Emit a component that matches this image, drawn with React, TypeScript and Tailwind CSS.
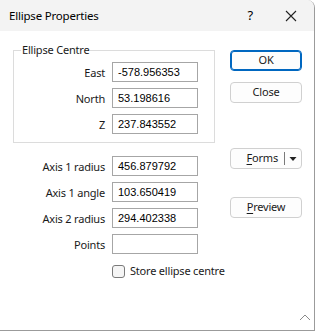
import React from "react";

const ui = "font-['Noto_Sans',sans-serif] text-[11px] tracking-[-0.2px] text-[#1a1a1a]";
const mono = "font-['Liberation_Sans',Arial,sans-serif] text-[11px] tracking-normal text-black";

function Field({ label, value }: { label: string; value?: string }) {
  return (
    <div className="flex items-center h-[20px]">
      <span className="w-[93px] pr-[7px] text-right leading-none whitespace-nowrap">{label}</span>
      <div
        className={`w-[86px] h-[20px] border border-[#a6a6a6] bg-white flex items-center pl-[5px] ${mono}`}>
        {value}
      </div>
    </div>
  );
}

function Btn({
  children,
  primary,
}: {
  children: React.ReactNode;
  primary?: boolean;
}) {
  return (
    <div
      className={`w-[72px] h-[21px] rounded-[4px] flex items-center justify-center bg-[#fdfdfd] ${
        primary ? "border border-[#0067c0] shadow-[inset_0_0_0_1px_#0067c0]" : "border border-[#d0d0d0]"
      }`}>
      {children}
    </div>
  );
}

export default function App() {
  return (
    <div className={`w-[316px] h-[331px] bg-white ${ui}`}>
      <div className="w-[315px] h-[331px] flex flex-col border-r border-b border-[#9b9b9b] rounded-tr-[8px] overflow-hidden bg-white">
        {/* title bar */}
        <div className="h-[31px] shrink-0 bg-[#f3f3f3] flex items-center">
          <span className="pl-[9px] text-[11.5px] text-black">Ellipse Properties</span>
          <span className="ml-auto mr-[32px] text-[13px] text-black">?</span>
          <svg width="12" height="12" viewBox="0 0 12 12" className="mr-[17px]">
            <path d="M1 1 L11 11 M11 1 L1 11" stroke="#222" strokeWidth="1.1" />
          </svg>
        </div>

        <div className="flex flex-1 relative">
          {/* left column */}
          <div className="w-[215px] pl-[13px] pt-[19px] flex flex-col">
            <div className="relative w-[202px] h-[93px] border border-[#dcdcdc] pt-[11px] flex flex-col gap-[6px]">
              <span className="absolute -top-[9px] left-[7px] bg-white px-[1px] leading-[16px]">
                Ellipse Centre
              </span>
              <div className="pl-[5px] flex flex-col gap-[6px]">
                <Field label="East" value="-578.956353" />
                <Field label="North" value="53.198616" />
                <Field label="Z" value="237.843552" />
              </div>
            </div>
            <div className="pl-[6px] pt-[13px] flex flex-col gap-[6px]">
              <Field label="Axis 1 radius" value="456.879792" />
              <Field label="Axis 1 angle" value="103.650419" />
              <Field label="Axis 2 radius" value="294.402338" />
              <Field label="Points" />
            </div>
            <div className="flex items-center pl-[99px] pt-[9px] whitespace-nowrap">
              <div className="w-[13px] h-[13px] shrink-0 rounded-[3px] border border-[#7a7a7a] bg-[#f5f5f5]" />
              <span className="pl-[5px]">Store ellipse centre</span>
            </div>
          </div>

          {/* right column */}
          <div className="pl-[15px] pt-[19px] flex flex-col">
            <Btn primary>OK</Btn>
            <div className="h-[11px]" />
            <Btn>Close</Btn>
            <div className="h-[45px]" />
            <div className="w-[72px] h-[21px] rounded-[4px] border border-[#d0d0d0] bg-[#fdfdfd] flex items-center">
              <span className="ml-auto pr-[6px]">
                <span className="underline underline-offset-2">F</span>orms
              </span>
              <div className="w-px h-[13px] bg-[#7a7a7a]" />
              <svg width="16" height="8" viewBox="0 0 16 8">
                <path d="M4.5 2 L11.5 2 L8 6 Z" fill="#222" />
              </svg>
            </div>
            <div className="h-[28px]" />
            <Btn>
              <span>
                <span className="underline underline-offset-2">P</span>review
              </span>
            </Btn>
          </div>

          <svg
            width="12"
            height="8"
            viewBox="0 0 12 8"
            className="absolute right-[3px] bottom-[9px]">
            <path d="M1 7 L6 2 L11 7" stroke="#8a8a8a" strokeWidth="1" fill="none" />
          </svg>
        </div>
      </div>
    </div>
  );
}
